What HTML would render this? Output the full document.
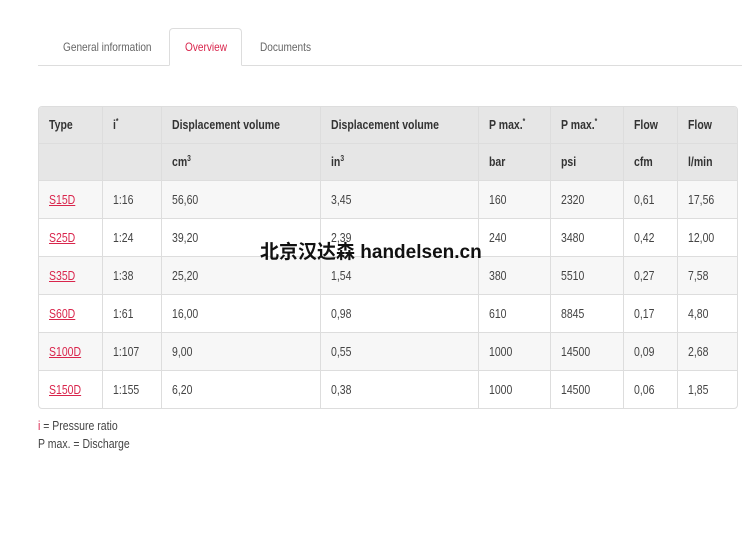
<!DOCTYPE html>
<html><head><meta charset="utf-8"><style>
*{margin:0;padding:0;box-sizing:border-box}
body{width:742px;height:534px;background:#fff;font-family:"Liberation Sans",sans-serif;font-size:12.5px;color:#444;position:relative;overflow:hidden}
.n{display:inline-block;transform:scaleX(0.84);transform-origin:left center;white-space:nowrap}
.tabs{position:absolute;left:38px;top:65px;width:704px;border-top:1px solid #ddd}
.tab{position:absolute;font-size:12px;color:#666}
.act{position:absolute;left:169px;top:28px;width:73px;height:38px;border:1px solid #ddd;border-bottom:1px solid #fff;border-radius:4px 4px 0 0;background:#fff;color:#d9254c;font-size:12px;line-height:36px;padding-left:15px}
table{position:absolute;left:38px;top:106px;width:700px;border-collapse:separate;border-spacing:0;border:1px solid #ddd;border-radius:4px;overflow:hidden;table-layout:fixed}
td{border-right:1px solid #ddd;border-bottom:1px solid #ddd;padding:0 10px;height:38px;vertical-align:middle;overflow:hidden}
tr td:last-child{border-right:none}
tr:last-child td{border-bottom:none;height:37px}
tr.h td{background:#e6e6e6;font-weight:bold;color:#333;height:37px}
tr.g td{background:#f7f7f7}
a{color:#d9254c;text-decoration:underline}
sup{font-size:8px}
.wm{position:absolute;left:260px;top:237px;font-family:"Liberation Sans","Noto Sans CJK SC",sans-serif;font-weight:bold;font-size:19px;color:#111;white-space:nowrap}
.note{position:absolute;left:38px;font-size:12.5px;color:#444}
</style></head><body>
<div class="tabs"></div>
<div class="tab" style="left:63px;top:40px"><span class="n">General information</span></div>
<div class="act"><span class="n">Overview</span></div>
<div class="tab" style="left:260px;top:40px"><span class="n">Documents</span></div>
<table>
<colgroup><col style="width:64px"><col style="width:59px"><col style="width:159px"><col style="width:158px"><col style="width:72px"><col style="width:73px"><col style="width:54px"><col></colgroup>
<tr class="h"><td><span class="n">Type</span></td><td><span class="n">i<sup>*</sup></span></td><td><span class="n">Displacement volume</span></td><td><span class="n">Displacement volume</span></td><td><span class="n">P max.<sup>*</sup></span></td><td><span class="n">P max.<sup>*</sup></span></td><td><span class="n">Flow</span></td><td><span class="n">Flow</span></td></tr>
<tr class="h"><td></td><td></td><td><span class="n">cm<sup>3</sup></span></td><td><span class="n">in<sup>3</sup></span></td><td><span class="n">bar</span></td><td><span class="n">psi</span></td><td><span class="n">cfm</span></td><td><span class="n">l/min</span></td></tr>
<tr class="g"><td><span class="n"><a>S15D</a></span></td><td><span class="n">1:16</span></td><td><span class="n">56,60</span></td><td><span class="n">3,45</span></td><td><span class="n">160</span></td><td><span class="n">2320</span></td><td><span class="n">0,61</span></td><td><span class="n">17,56</span></td></tr>
<tr><td><span class="n"><a>S25D</a></span></td><td><span class="n">1:24</span></td><td><span class="n">39,20</span></td><td><span class="n">2,39</span></td><td><span class="n">240</span></td><td><span class="n">3480</span></td><td><span class="n">0,42</span></td><td><span class="n">12,00</span></td></tr>
<tr class="g"><td><span class="n"><a>S35D</a></span></td><td><span class="n">1:38</span></td><td><span class="n">25,20</span></td><td><span class="n">1,54</span></td><td><span class="n">380</span></td><td><span class="n">5510</span></td><td><span class="n">0,27</span></td><td><span class="n">7,58</span></td></tr>
<tr><td><span class="n"><a>S60D</a></span></td><td><span class="n">1:61</span></td><td><span class="n">16,00</span></td><td><span class="n">0,98</span></td><td><span class="n">610</span></td><td><span class="n">8845</span></td><td><span class="n">0,17</span></td><td><span class="n">4,80</span></td></tr>
<tr class="g"><td><span class="n"><a>S100D</a></span></td><td><span class="n">1:107</span></td><td><span class="n">9,00</span></td><td><span class="n">0,55</span></td><td><span class="n">1000</span></td><td><span class="n">14500</span></td><td><span class="n">0,09</span></td><td><span class="n">2,68</span></td></tr>
<tr><td><span class="n"><a>S150D</a></span></td><td><span class="n">1:155</span></td><td><span class="n">6,20</span></td><td><span class="n">0,38</span></td><td><span class="n">1000</span></td><td><span class="n">14500</span></td><td><span class="n">0,06</span></td><td><span class="n">1,85</span></td></tr>
</table>
<div class="wm">北京汉达森 handelsen.cn</div>
<div class="note" style="top:419px"><span class="n"><span style="color:#d9254c">i</span> = Pressure ratio</span></div>
<div class="note" style="top:437px"><span class="n">P max. = Discharge</span></div>
</body></html>
